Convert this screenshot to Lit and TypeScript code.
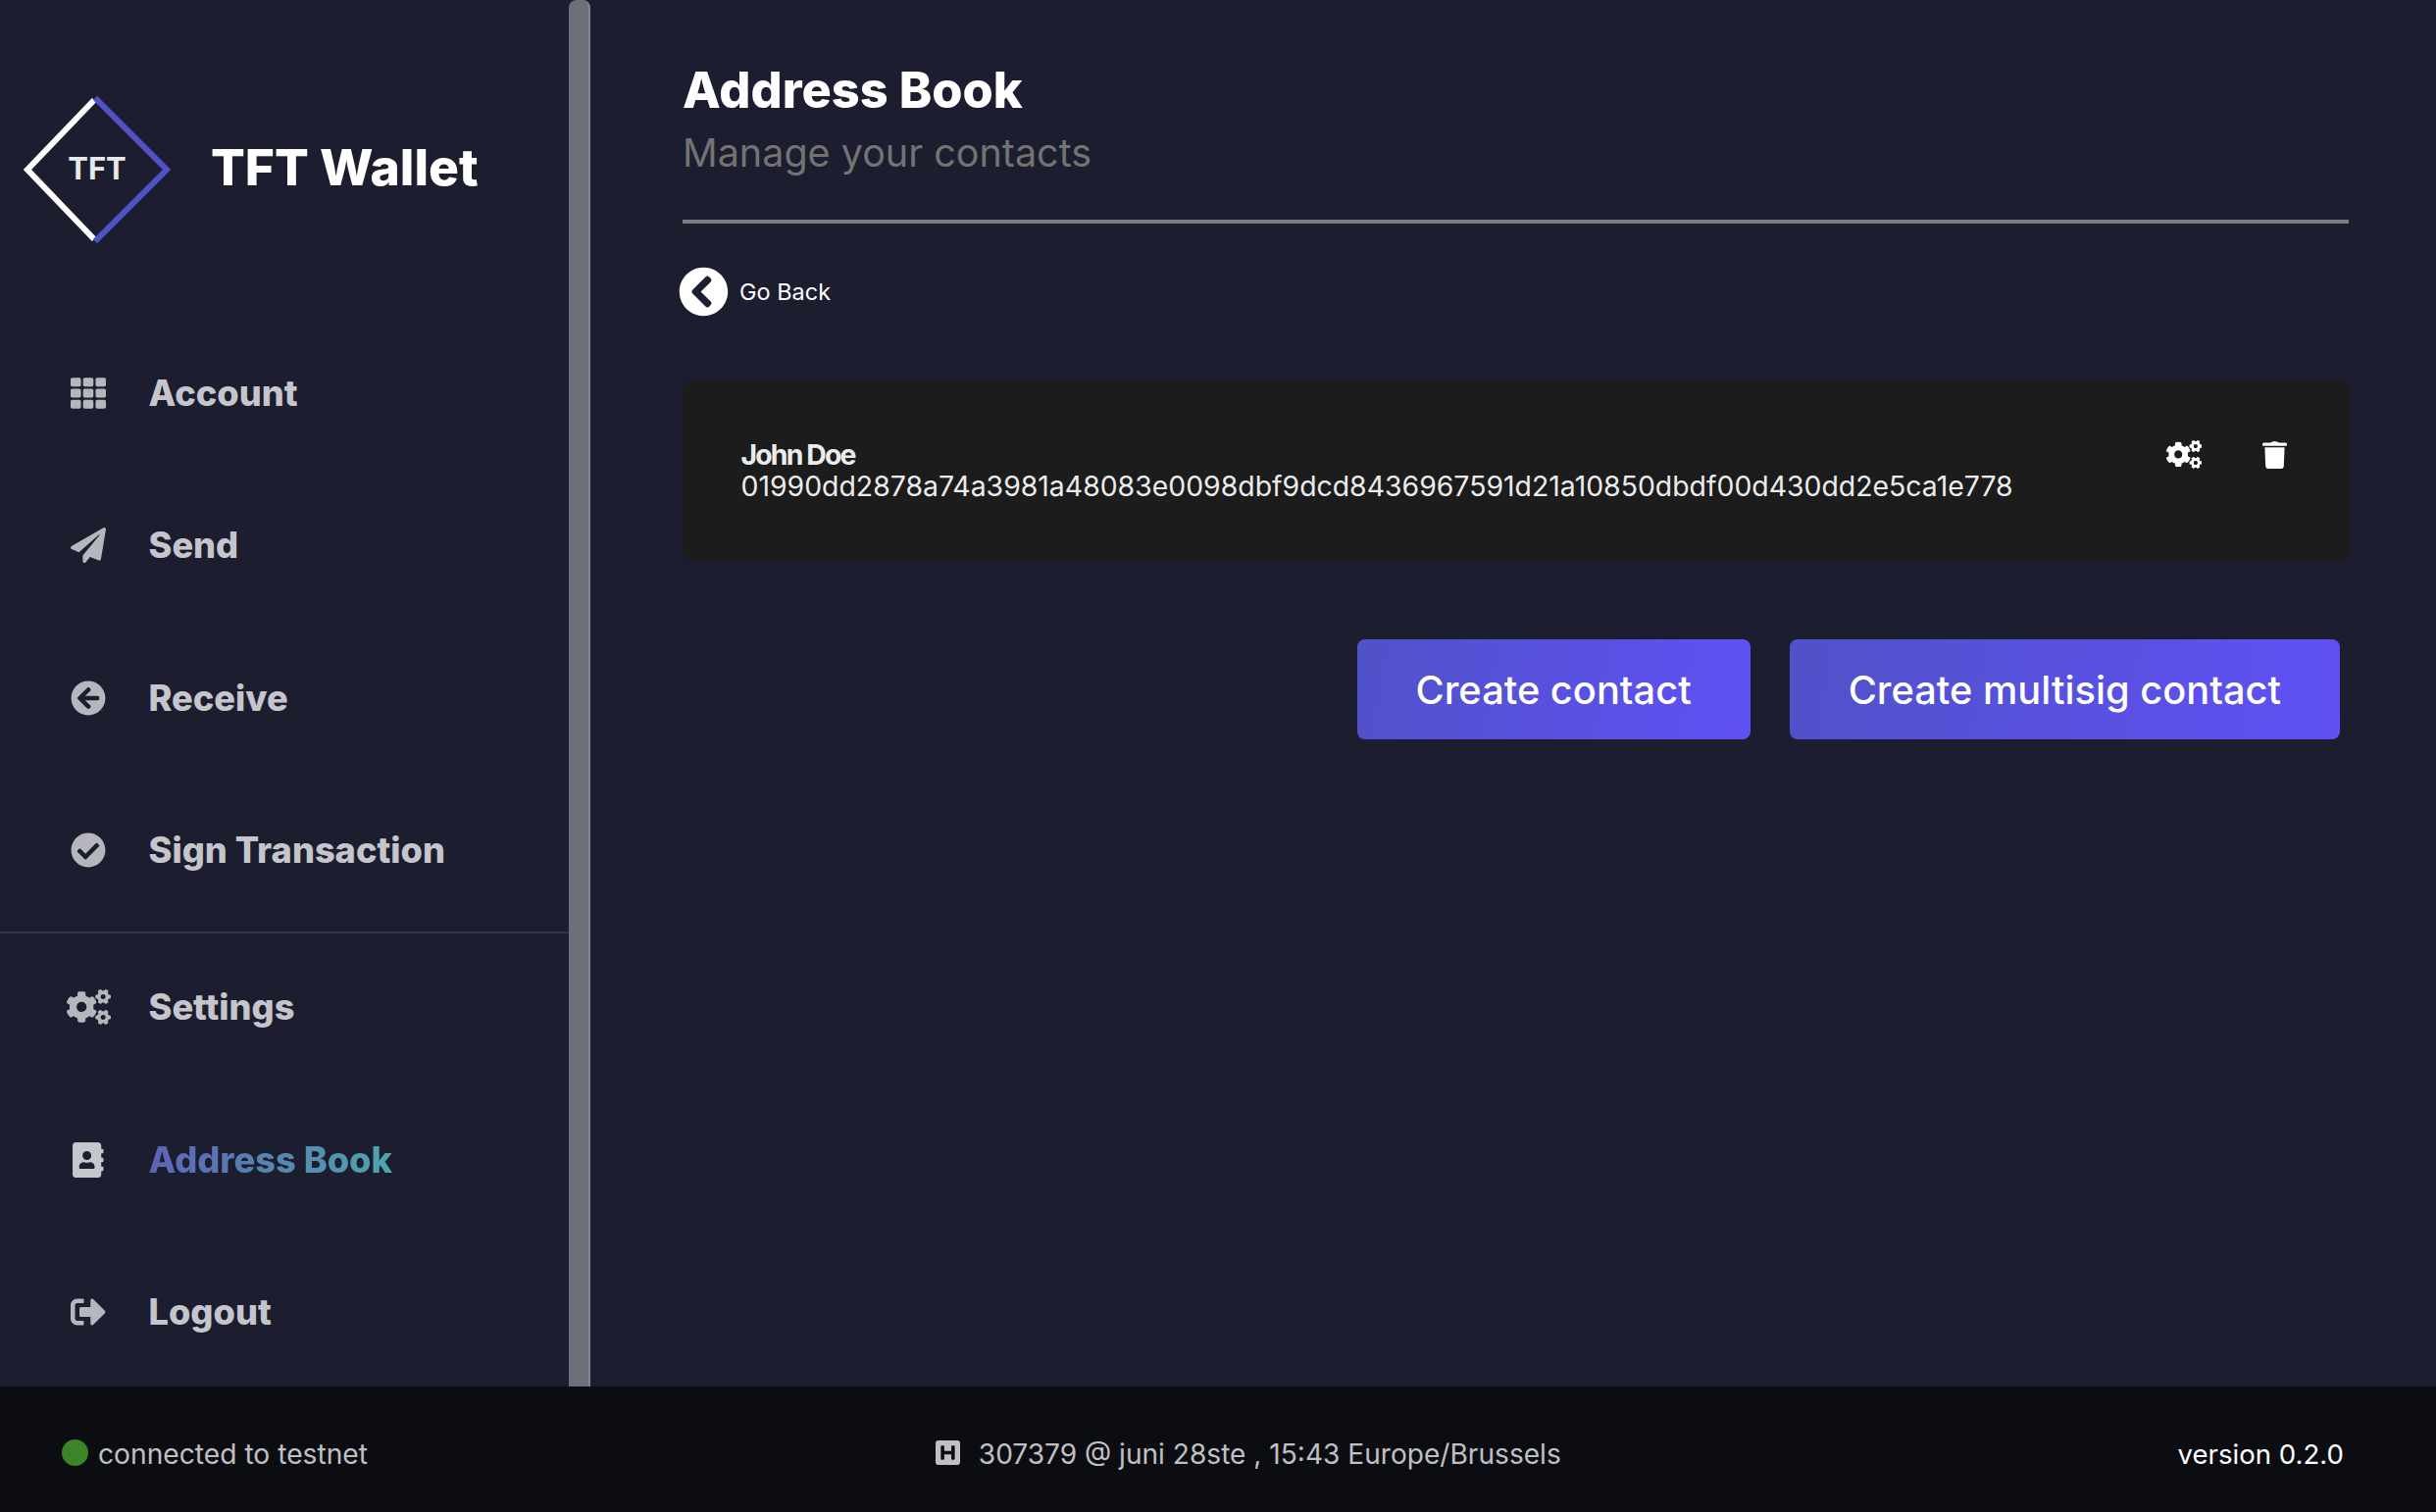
import { LitElement, html, css, svg } from "lit";
import { customElement } from "lit/decorators.js";

const P = {
  th: ["0 0 512 512", "M149.333 56v80c0 13.255-10.745 24-24 24H24c-13.255 0-24-10.745-24-24V56c0-13.255 10.745-24 24-24h101.333c13.255 0 24 10.745 24 24zm181.334 240v-80c0-13.255-10.745-24-24-24H205.333c-13.255 0-24 10.745-24 24v80c0 13.255 10.745 24 24 24h101.333c13.256 0 24.001-10.745 24.001-24zm32-240v80c0 13.255 10.745 24 24 24H488c13.255 0 24-10.745 24-24V56c0-13.255-10.745-24-24-24H386.667c-13.255 0-24 10.745-24 24zm-32 80V56c0-13.255-10.745-24-24-24H205.333c-13.255 0-24 10.745-24 24v80c0 13.255 10.745 24 24 24h101.333c13.256 0 24.001-10.745 24.001-24zm-205.334 56H24c-13.255 0-24 10.745-24 24v80c0 13.255 10.745 24 24 24h101.333c13.255 0 24-10.745 24-24v-80c0-13.255-10.745-24-24-24zM0 376v80c0 13.255 10.745 24 24 24h101.333c13.255 0 24-10.745 24-24v-80c0-13.255-10.745-24-24-24H24c-13.255 0-24 10.745-24 24zm386.667-56H488c13.255 0 24-10.745 24-24v-80c0-13.255-10.745-24-24-24H386.667c-13.255 0-24 10.745-24 24v80c0 13.255 10.745 24 24 24zm0 160H488c13.255 0 24-10.745 24-24v-80c0-13.255-10.745-24-24-24H386.667c-13.255 0-24 10.745-24 24v80c0 13.255 10.745 24 24 24zM181.333 376v80c0 13.255 10.745 24 24 24h101.333c13.255 0 24-10.745 24-24v-80c0-13.255-10.745-24-24-24H205.333c-13.255 0-24 10.745-24 24z"],
  plane: ["0 0 512 512", "M476 3.2L12.5 270.6c-18.1 10.4-15.8 35.6 2.2 43.2L121 358.4l287.3-253.2c5.5-4.9 13.3 2.6 8.6 8.3L176 407v80.5c0 23.6 28.5 32.9 42.5 15.8L282 426l124.6 52.2c14.2 6 30.4-2.9 33-18.2l72-432C515 7.8 493.3-6.8 476 3.2z"],
  arrowLeft: ["0 0 512 512", "M256 504C119 504 8 393 8 256S119 8 256 8s248 111 248 248-111 248-248 248zm28.9-143.6L209.4 288H392c13.3 0 24-10.7 24-24v-16c0-13.3-10.7-24-24-24H209.4l75.5-72.4c9.7-9.3 9.9-24.8.4-34.3l-11-10.9c-9.4-9.4-24.6-9.4-33.9 0L107.7 239c-9.4 9.4-9.4 24.6 0 33.9l132.7 132.7c9.4 9.4 24.6 9.4 33.9 0l11-10.9c9.5-9.5 9.3-25-.4-34.3z"],
  check: ["0 0 512 512", "M504 256c0 136.967-111.033 248-248 248S8 392.967 8 256 119.033 8 256 8s248 111.033 248 248zM227.314 387.314l184-184c6.248-6.248 6.248-16.379 0-22.627l-22.627-22.627c-6.248-6.249-16.379-6.249-22.628 0L216 308.118l-70.059-70.059c-6.248-6.248-16.379-6.248-22.628 0l-22.627 22.627c-6.248 6.248-6.248 16.379 0 22.627l104 104c6.249 6.249 16.379 6.249 22.628.001z"],
  cogs: ["0 0 640 512", "M512.1 191l-8.2 14.3c-3 5.3-9.4 7.5-15.1 5.4-11.8-4.4-22.6-10.7-32.1-18.6-4.6-3.8-5.8-10.5-2.8-15.7l8.2-14.3c-6.9-8-12.3-17.3-15.9-27.4h-16.5c-6 0-11.2-4.3-12.2-10.3-2-12-2.1-24.6 0-37.1 1-6 6.2-10.4 12.2-10.4h16.5c3.6-10.1 9-19.4 15.9-27.4l-8.2-14.3c-3-5.2-1.9-11.9 2.8-15.7 9.5-7.9 20.4-14.2 32.1-18.6 5.7-2.1 12.1.1 15.1 5.4l8.2 14.3c10.5-1.9 21.2-1.9 31.7 0L552 6.3c3-5.3 9.4-7.5 15.1-5.4 11.8 4.4 22.6 10.7 32.1 18.6 4.6 3.8 5.8 10.5 2.8 15.7l-8.2 14.3c6.9 8 12.3 17.3 15.9 27.4h16.5c6 0 11.2 4.3 12.2 10.3 2 12 2.1 24.6 0 37.1-1 6-6.2 10.4-12.2 10.4h-16.5c-3.6 10.1-9 19.4-15.9 27.4l8.2 14.3c3 5.2 1.9 11.9-2.8 15.7-9.5 7.9-20.4 14.2-32.1 18.6-5.7 2.1-12.1-.1-15.1-5.4l-8.2-14.3c-10.4 1.9-21.2 1.9-31.7 0zm-10.5-58.8c38.5 29.6 82.4-14.3 52.8-52.8-38.5-29.7-82.4 14.3-52.8 52.8zM386.3 286.1l33.7 16.8c10.1 5.8 14.5 18.1 10.5 29.1-8.9 24.2-26.4 46.4-42.6 65.8-7.4 8.9-20.2 11.1-30.3 5.3l-29.1-16.8c-16 13.7-34.6 24.6-54.9 31.7v33.6c0 11.6-8.3 21.6-19.7 23.6-24.6 4.2-50.4 4.4-75.9 0-11.5-2-20-11.9-20-23.6V418c-20.3-7.2-38.9-18-54.9-31.7L74 403c-10 5.8-22.9 3.6-30.3-5.3-16.2-19.4-33.3-41.6-42.2-65.7-4-10.9.4-23.2 10.5-29.1l33.3-16.8c-3.9-20.9-3.9-42.4 0-63.4L12 205.8c-10.1-5.8-14.6-18.1-10.5-29 8.9-24.2 26-46.4 42.2-65.8 7.4-8.9 20.2-11.1 30.3-5.3l29.1 16.8c16-13.7 34.6-24.6 54.9-31.7V57.1c0-11.5 8.2-21.5 19.6-23.5 24.6-4.2 50.5-4.4 76-.1 11.5 2 20 11.9 20 23.6v33.6c20.3 7.2 38.9 18 54.9 31.7l29.1-16.8c10-5.8 22.9-3.6 30.3 5.3 16.2 19.4 33.2 41.6 42.1 65.8 4 10.9.1 23.2-10 29.1l-33.7 16.8c3.9 21 3.9 42.5 0 63.5zm-117.6 21.1c59.2-77-28.7-164.9-105.7-105.7-59.2 77 28.7 164.9 105.7 105.7zm243.4 182.7l-8.2 14.3c-3 5.3-9.4 7.5-15.1 5.4-11.8-4.4-22.6-10.7-32.1-18.6-4.6-3.8-5.8-10.5-2.8-15.7l8.2-14.3c-6.9-8-12.3-17.3-15.9-27.4h-16.5c-6 0-11.2-4.3-12.2-10.3-2-12-2.1-24.6 0-37.1 1-6 6.2-10.4 12.2-10.4h16.5c3.6-10.1 9-19.4 15.9-27.4l-8.2-14.3c-3-5.2-1.9-11.9 2.8-15.7 9.5-7.9 20.4-14.2 32.1-18.6 5.7-2.1 12.1.1 15.1 5.4l8.2 14.3c10.5-1.9 21.2-1.9 31.7 0l8.2-14.3c3-5.3 9.4-7.5 15.1-5.4 11.8 4.4 22.6 10.7 32.1 18.6 4.6 3.8 5.8 10.5 2.8 15.7l-8.2 14.3c6.9 8 12.3 17.3 15.9 27.4h16.5c6 0 11.2 4.3 12.2 10.3 2 12 2.1 24.6 0 37.1-1 6-6.2 10.4-12.2 10.4h-16.5c-3.6 10.1-9 19.4-15.9 27.4l8.2 14.3c3 5.2 1.9 11.9-2.8 15.7-9.5 7.9-20.4 14.2-32.1 18.6-5.7 2.1-12.1-.1-15.1-5.4l-8.2-14.3c-10.4 1.9-21.2 1.9-31.7 0zM501.6 431c38.5 29.6 82.4-14.3 52.8-52.8-38.5-29.6-82.4 14.3-52.8 52.8z"],
  book: ["0 0 448 512", "M436 160c6.6 0 12-5.4 12-12v-40c0-6.6-5.4-12-12-12h-20V48c0-26.5-21.5-48-48-48H48C21.5 0 0 21.5 0 48v416c0 26.5 21.5 48 48 48h320c26.5 0 48-21.5 48-48v-48h20c6.6 0 12-5.4 12-12v-40c0-6.6-5.4-12-12-12h-20v-64h20c6.6 0 12-5.4 12-12v-40c0-6.6-5.4-12-12-12h-20v-64h20zm-228-32c35.3 0 64 28.7 64 64s-28.7 64-64 64-64-28.7-64-64 28.7-64 64-64zm112 236.8c0 10.6-10 19.2-22.4 19.2H118.4C106 384 96 375.4 96 364.8v-19.2c0-31.8 30.1-57.6 67.2-57.6h5c12.3 5.1 25.7 8 39.8 8s27.6-2.9 39.8-8h5c37.1 0 67.2 25.8 67.2 57.6v19.2z"],
  signout: ["0 0 512 512", "M497 273L329 441c-15 15-41 4.5-41-17v-96H152c-13.3 0-24-10.7-24-24v-96c0-13.3 10.7-24 24-24h136V88c0-21.4 25.9-32 41-17l168 168c9.3 9.4 9.3 24.6 0 34zM192 436v-40c0-6.6-5.4-12-12-12H96c-17.7 0-32-14.3-32-32V160c0-17.7 14.3-32 32-32h84c6.6 0 12-5.4 12-12V76c0-6.6-5.4-12-12-12H96c-53 0-96 43-96 96v192c0 53 43 96 96 96h84c6.6 0 12-5.4 12-12z"],
  chevron: ["0 0 512 512", "M256 504C119 504 8 393 8 256S119 8 256 8s248 111 248 248-111 248-248 248zM142.1 273l135.5 135.5c9.4 9.4 24.6 9.4 33.9 0l17-17c9.4-9.4 9.4-24.6 0-33.9L226.9 256l101.6-101.6c9.4-9.4 9.4-24.6 0-33.9l-17-17c-9.4-9.4-24.6-9.4-33.9 0L142.1 239c-9.4 9.4-9.4 24.6 0 34z"],
  hsquare: ["0 0 448 512", "M448 80v352c0 26.51-21.49 48-48 48H48c-26.51 0-48-21.49-48-48V80c0-26.51 21.49-48 48-48h352c26.51 0 48 21.49 48 48zm-112 48h-32c-8.837 0-16 7.163-16 16v80H160v-80c0-8.837-7.163-16-16-16h-32c-8.837 0-16 7.163-16 16v224c0 8.837 7.163 16 16 16h32c8.837 0 16-7.163 16-16v-80h128v80c0 8.837 7.163 16 16 16h32c8.837 0 16-7.163 16-16V144c0-8.837-7.163-16-16-16z"],
  trash: ["0 0 25 29", "M8 2.4Q12.5-.6 17 2.4L23.6 2.6Q25 2.7 25 4V5Q25 5.7 24 5.7H1Q0 5.7 0 5V4Q0 2.7 1.4 2.6ZM2.4 7.2H22.6L21.8 26.5Q21.6 29 19 29H6Q3.4 29 3.2 26.5Z"],
} as const;

type IconName = keyof typeof P;

function icon(name: IconName, cls: string) {
  const [vb, d] = P[name];
  return html`<svg class=${cls} viewBox=${vb} aria-hidden="true">${svg`<path d=${d} fill="currentColor"></path>`}</svg>`;
}

const TOP: [IconName, string][] = [
  ["th", "Account"],
  ["plane", "Send"],
  ["arrowLeft", "Receive"],
  ["check", "Sign Transaction"],
];

@customElement("app-root")
export class AppRoot extends LitElement {
  static styles = css`
    :host {
      display: flex;
      flex-direction: column;
      width: 100%;
      height: 100vh;
      background: #1c1e2f;
      font-family: Inter, "Liberation Sans", sans-serif;
      color: #fff;
      overflow: hidden;
    }
    * { box-sizing: border-box; }
    .top { display: flex; flex: none; height: 1414px; overflow: hidden; }
    .sidebar { flex: none; width: 580px; height: 1414px; overflow: hidden; }
    .rail {
      flex: none; width: 22px; height: 1414px;
      background: #6c7079;
      border-right: 2px solid #85868b;
      border-radius: 8px 8px 0 0;
    }
    .brand {
      display: flex; align-items: center; gap: 41px;
      height: 323px; padding: 98px 0 76px 24px;
    }
    .logo { width: 150px; height: 150px; flex: none; display: block; }
    .logo text { font: 700 31px Inter, sans-serif; fill: #e9e9ec; }
    .brand-name {
      font-size: 51.5px; font-weight: 800; line-height: 60px; margin-top: -5px;
      white-space: nowrap;
    }
    .item {
      display: flex; align-items: center; height: 155.5px; padding-left: 67.5px;
      color: #c5c6cb; font-size: 36.2px; font-weight: 800; white-space: nowrap;
    }
    .item .slot { width: 45px; display: flex; justify-content: center; margin-right: 39px; color: #b6b7bd; }
    .item.active .slot { color: #c6c7cc; }
    .item.first { margin-top: -2.5px; }
    .ic { height: 36px; display: block; }
    .rule-side { height: 2px; background: #33354a; margin-top: 5px; }
    .grad {
      background: linear-gradient(90deg, #5f63b4, #4da6ad);
      -webkit-background-clip: text; background-clip: text;
      color: transparent;
    }
    .main { flex: 1; min-width: 0; padding: 63px 89px 0 94px; }
    h1 { margin: 0 0 11px; font-size: 50.5px; line-height: 58px; font-weight: 800; white-space: nowrap; }
    .sub { font-size: 39.5px; line-height: 48px; color: #737373; white-space: nowrap; }
    .hr { height: 4px; background: #7c7c80; margin-top: 44px; }
    .back { display: flex; align-items: center; height: 50px; margin: 44px 0 66px -4px; gap: 11px; font-size: 23.5px; }
    .back svg { width: 51px; height: 51px; display: block; flex: none; }
    .card {
      display: flex; justify-content: space-between; align-items: flex-start;
      height: 184px; padding: 60px 63px 60px 59.5px;
      background: #1c1c1c; border-radius: 10px; color: #ececec;
      font-size: 28.4px; line-height: 32px;
    }
    .name { font-weight: 700; letter-spacing: -1.85px; }
    .actions { display: flex; align-items: flex-start; gap: 62px; margin-top: 1px; color: #fff; }
    .a-cogs { height: 29px; display: block; }
    .a-trash { width: 25px; height: 29px; display: block; }
    .buttons { display: flex; justify-content: flex-end; gap: 40px; margin: 80px 9px 0 0; }
    .btn {
      height: 102px; padding: 0 60px; display: flex; align-items: center;
      border-radius: 8px; background: linear-gradient(100deg, #5052c8, #6050f5);
      font-size: 39.8px; font-weight: 500; white-space: nowrap;
    }
    .footer {
      flex: none; height: 128px; display: flex; align-items: center; justify-content: space-between;
      padding: 7px 94px 0 63px; background: #0c0d12; color: #c0c0c4; font-size: 28px; white-space: nowrap;
    }
    .status { display: flex; align-items: center; gap: 10px; font-size: 28.2px; }
    .status span:last-child { position: relative; top: 1px; }
    .dot { width: 27px; height: 27px; border-radius: 50%; background: #3c8427; flex: none; }
    .block { display: flex; align-items: center; gap: 19px; margin-right: 50px; font-size: 28.1px; }
    .block span { position: relative; top: 1px; }
    .block svg { width: 25px; height: 29px; display: block; }
    .ver { color: #fff; font-size: 27.6px; position: relative; top: 1px; }
  `;

  private navItem(name: IconName, label: string, extra = "", active = false) {
    return html`<div class="item ${extra} ${active ? "active" : ""}">
      <span class="slot">${icon(name, "ic")}</span>
      <span class=${active ? "grad" : ""}>${label}</span>
    </div>`;
  }

  render() {
    return html`
      <div class="top">
        <aside class="sidebar">
          <div class="brand">
            <svg class="logo" viewBox="0 0 150 150">
              <path d="M72 4 L4 75 L72 146" fill="none" stroke="#fff" stroke-width="6"></path>
              <path d="M73 2 L146 75 L73 148" fill="none" stroke="#4f52c9" stroke-width="6"></path>
              <text x="75" y="85" text-anchor="middle">TFT</text>
            </svg>
            <div class="brand-name">TFT Wallet</div>
          </div>
          ${TOP.map(([n, l]) => this.navItem(n, l))}
          <div class="rule-side"></div>
          ${this.navItem("cogs", "Settings", "first")}
          ${this.navItem("book", "Address Book", "", true)}
          ${this.navItem("signout", "Logout")}
        </aside>
        <div class="rail"></div>
        <main class="main">
          <h1>Address Book</h1>
          <div class="sub">Manage your contacts</div>
          <div class="hr"></div>
          <div class="back">${icon("chevron", "")}<span>Go Back</span></div>
          <div class="card">
            <div>
              <div class="name">John Doe</div>
              <div>01990dd2878a74a3981a48083e0098dbf9dcd8436967591d21a10850dbdf00d430dd2e5ca1e778</div>
            </div>
            <div class="actions">
              ${icon("cogs", "a-cogs")}
              ${icon("trash", "a-trash")}
            </div>
          </div>
          <div class="buttons">
            <div class="btn">Create contact</div>
            <div class="btn">Create multisig contact</div>
          </div>
        </main>
      </div>
      <footer class="footer">
        <div class="status"><span class="dot"></span><span>connected to testnet</span></div>
        <div class="block">${icon("hsquare", "")}<span>307379 @ juni 28ste , 15:43 Europe/Brussels</span></div>
        <div class="ver">version 0.2.0</div>
      </footer>
    `;
  }
}
